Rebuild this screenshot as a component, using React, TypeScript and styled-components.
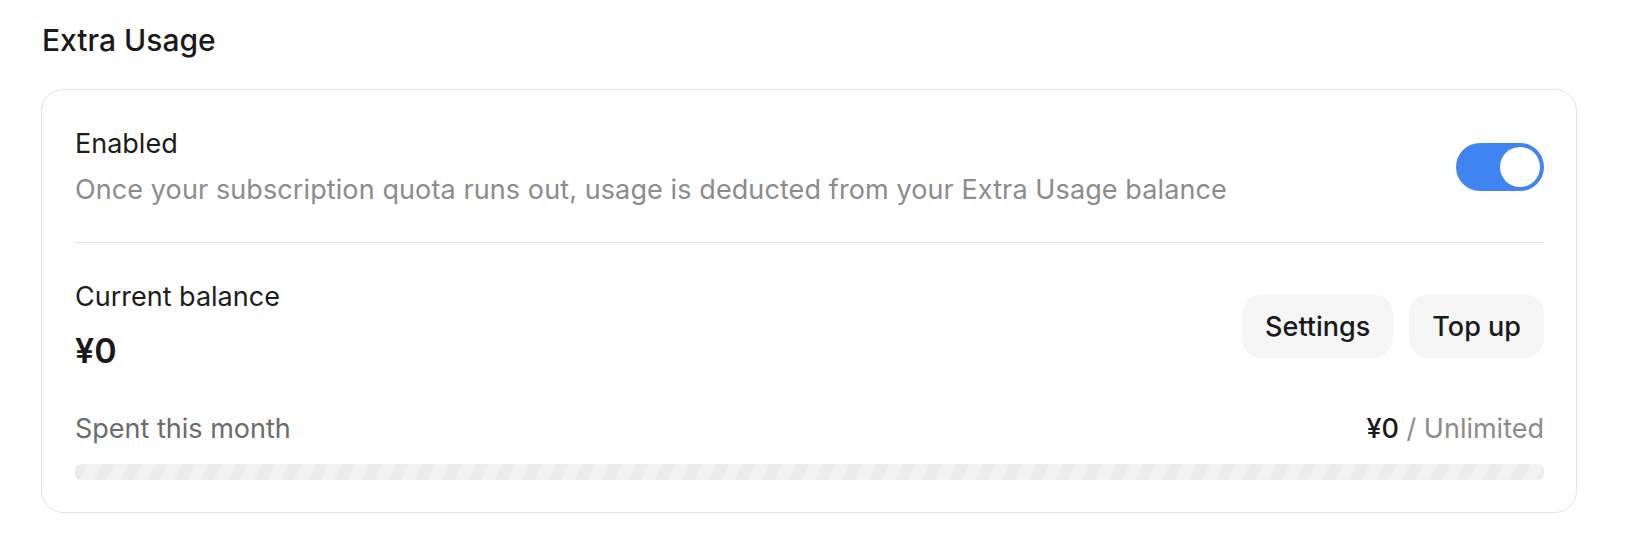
import * as React from "react"
import {useState} from "react"
import styled, {createGlobalStyle} from "styled-components"

const GlobalStyle = createGlobalStyle`
    html, body {
        margin: 0;
        padding: 0;
        background: #ffffff;
    }

    body {
        font-family: Inter, "Noto Sans", "Liberation Sans", sans-serif;
        color: #1a1a1a;
        -webkit-font-smoothing: antialiased;
    }
`

const Switch = ({checked, onChange}: { checked: boolean, onChange: (v: boolean) => void }) => (
    <SwitchTrack
        type="button"
        role="switch"
        aria-checked={checked}
        $on={checked}
        onClick={() => onChange(!checked)}
    >
        <SwitchKnob/>
    </SwitchTrack>
)

export default function App() {
    const [enabled, setEnabled] = useState(true)

    const balance = 0
    const spent = 0

    return (
        <Page>
            <GlobalStyle/>
            <SectionTitle>Extra Usage</SectionTitle>
            <Card>
                <Row>
                    <TextBlock $gap={10}>
                        <Label>Enabled</Label>
                        <Hint>Once your subscription quota runs out, usage is deducted from your Extra Usage balance</Hint>
                    </TextBlock>
                    <Switch checked={enabled} onChange={setEnabled}/>
                </Row>

                <Divider/>

                <Row className="balance">
                    <TextBlock $gap={14}>
                        <Label>Current balance</Label>
                        <Amount>¥{balance}</Amount>
                    </TextBlock>
                    <Actions>
                        <PillButton type="button">Settings</PillButton>
                        <PillButton type="button">Top up</PillButton>
                    </Actions>
                </Row>

                <SpentRow>
                    <Muted>Spent this month</Muted>
                    <Limit>
                        <strong>¥{spent}</strong> / Unlimited
                    </Limit>
                </SpentRow>
                <Bar/>
            </Card>
        </Page>
    )
}


const Page = styled.div`
    padding: 20px 51px 40px 41px;
`

const SectionTitle = styled.h2`
    margin: 0 0 29px 1px;
    font-size: 30px;
    line-height: 40px;
    font-weight: 500;
    color: #1a1a1a;
`

const Card = styled.div`
    border: 1px solid #e3e3e3;
    border-radius: 22px;
    padding: 36px 32px 32px 33px;
`

const Row = styled.div`
    display: flex;
    align-items: center;
    justify-content: space-between;
    gap: 24px;

    &.balance {
        padding-top: 36px;
    }
`

const TextBlock = styled.div<{ $gap: number }>`
    display: flex;
    flex-direction: column;
    gap: ${p => p.$gap}px;
`

const Label = styled.div`
    font-size: 27px;
    line-height: 36px;
    color: #1c1c1c;
`

const Hint = styled.div`
    font-size: 27px;
    line-height: 36px;
    letter-spacing: 0.1px;
    color: #8c8c8c;
`

const Amount = styled.div`
    font-size: 34px;
    line-height: 44px;
    font-weight: 600;
    color: #1a1a1a;
`

const SwitchTrack = styled.button<{ $on: boolean }>`
    flex-shrink: 0;
    width: 88px;
    height: 48px;
    padding: 4px;
    border: none;
    border-radius: 24px;
    background: ${p => p.$on ? "#4084f2" : "#d9d9d9"};
    display: flex;
    justify-content: ${p => p.$on ? "flex-end" : "flex-start"};
    cursor: pointer;
`

const SwitchKnob = styled.span`
    width: 40px;
    height: 40px;
    border-radius: 50%;
    background: #ffffff;
`

const Divider = styled.div`
    height: 1px;
    background: #e2e2e2;
    margin-top: 34px;
`

const Actions = styled.div`
    display: flex;
    gap: 16px;
`

const PillButton = styled.button`
    height: 64px;
    padding: 0 23px;
    border: none;
    border-radius: 20px;
    background: #f5f5f5;
    font-family: inherit;
    font-size: 27px;
    font-weight: 500;
    color: #1a1a1a;
    cursor: pointer;
`

const SpentRow = styled.div`
    display: flex;
    justify-content: space-between;
    align-items: baseline;
    margin-top: 38px;
    font-size: 27px;
    line-height: 36px;
`

const Muted = styled.span`
    color: #6b6b6b;
`

const Limit = styled.span`
    color: #8c8c8c;

    strong {
        font-weight: 500;
        color: #1a1a1a;
    }
`

const Bar = styled.div`
    margin-top: 17px;
    height: 16px;
    border-radius: 6px;
    background: repeating-linear-gradient(
            116deg,
            #ececec 0 12px,
            #f3f3f3 12px 24px
    );
`
